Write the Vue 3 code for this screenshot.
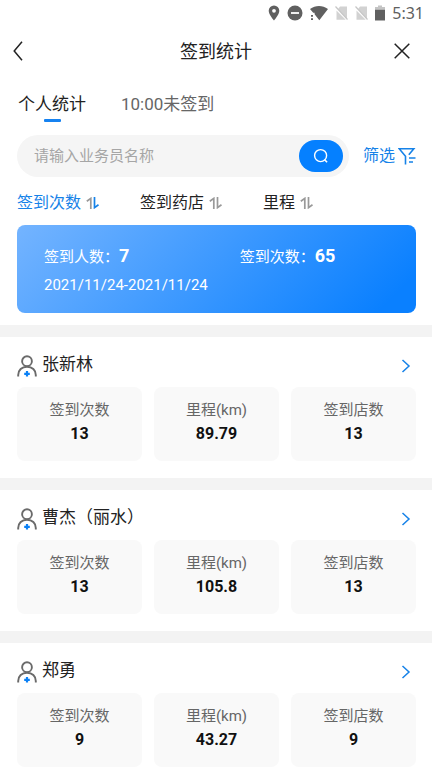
<script setup>
import { ref } from 'vue'

const keyword = ref('')
const activeTab = ref(0)
const activeSort = ref(0)
const tabs = ['个人统计', '10:00未签到']
const sorts = ['签到次数', '签到药店', '里程']
const people = [
  { name: '张新林', visits: '13', mileage: '89.79', stores: '13' },
  { name: '曹杰（丽水）', visits: '13', mileage: '105.8', stores: '13' },
  { name: '郑勇', visits: '9', mileage: '43.27', stores: '9' },
]
</script>

<template>
  <div class="page">
    <div class="status">
      <svg width="12" height="16" viewBox="0 0 12 16" aria-hidden="true">
        <path fill="#606060" fill-rule="evenodd" d="M6 0.5A5.3 5.3 0 0 0 .7 5.8C.7 9.8 6 15.5 6 15.5s5.300-5.700 5.300-9.700A5.300 5.300 0 0 0 6 .5zM6 3.900a1.900 1.900 0 1 1 0 3.800 1.900 1.900 0 0 1 0-3.800z" />
      </svg>
      <svg width="16" height="16" viewBox="0 0 16 16" aria-hidden="true">
        <circle cx="8" cy="8" r="7.500" fill="#606060" />
        <path d="M4 8h8" stroke="#fff" stroke-width="1.800" />
      </svg>
      <svg width="18" height="16" viewBox="0 0 18 16" aria-hidden="true">
        <path fill="#606060" d="M0 4.100C5.500-.1 12.500-.1 18 4.100L9.300 15.200 4.600 9.200V7.700H3.200z" />
        <path fill="#606060" d="M1 10h2v1.800H1zM1 13.200h2V15H1z" />
      </svg>
      <svg v-for="n in 2" :key="n" width="13" height="16" viewBox="0 0 13 16" aria-hidden="true">
        <path fill="#d2d2d2" d="M5 1.500h7v12.300L3 4.100zM1.500 5.500l9.200 9.200H1.500z" />
        <path d="M.5 1.500l12 13" stroke="#c6c6c6" stroke-width="1.200" />
      </svg>
      <svg width="10" height="16" viewBox="0 0 10 16" aria-hidden="true">
        <path fill="#c4c4c4" d="M3 .5h4V2h3v3H0V2h3z" />
        <path fill="#606060" d="M0 4.800h10v10.700H0z" />
      </svg>
      <span class="clock">5:31</span>
    </div>

    <header class="nav">
      <button class="nav-btn" type="button" aria-label="返回">
        <svg width="10" height="20" viewBox="0 0 10 20"><path d="M9 .8L1.200 10 9 19.200" fill="none" stroke="#222" stroke-width="1.500" /></svg>
      </button>
      <h1>签到统计</h1>
      <button class="nav-btn close" type="button" aria-label="关闭">
        <svg width="16" height="16" viewBox="0 0 16 16"><path d="M.7.7l14.600 14.600M15.300.7L.7 15.300" fill="none" stroke="#222" stroke-width="1.500" /></svg>
      </button>
    </header>

    <nav class="tabs">
      <button v-for="(tab, i) in tabs" :key="tab" type="button" class="tab" :class="{ active: activeTab === i }" @click="activeTab = i">{{ tab }}</button>
    </nav>

    <div class="search-row">
      <form class="search" @submit.prevent>
        <input v-model="keyword" type="text" placeholder="请输入业务员名称" aria-label="请输入业务员名称" />
        <button class="search-btn" type="submit" aria-label="搜索">
          <svg width="16" height="16" viewBox="0 0 16 16"><circle cx="7.600" cy="7.600" r="6" fill="none" stroke="#fff" stroke-width="1.400" /><path d="M11.500 11.600l2.600 2.600" stroke="#fff" stroke-width="1.500" /></svg>
        </button>
      </form>
      <button class="filter" type="button">
        <span>筛选</span>
        <svg width="18" height="18" viewBox="0 0 18 18" fill="none" stroke="#1682e8" stroke-width="1.600" aria-hidden="true"><path d="M7.500 17.500V9.200L1.200 1.700h14.600l-5 6M11 11h6.500M11 15h4" /></svg>
      </button>
    </div>

    <div class="sorts">
      <button v-for="(sort, i) in sorts" :key="sort" type="button" class="sort" :class="{ active: activeSort === i }" @click="activeSort = i">
        <span>{{ sort }}</span>
        <svg width="14" height="12" viewBox="0 0 14 12" fill="none" stroke-width="1.700" aria-hidden="true">
          <path class="up" d="M.8 4.300l4-2.900V12" />
          <path class="down" d="M8.500 0v10.600l4-2.900" />
        </svg>
      </button>
    </div>

    <section class="summary">
      <p>签到人数：<strong>7</strong></p>
      <p>签到次数：<strong>65</strong></p>
      <p class="dates">2021/11/24-2021/11/24</p>
    </section>

    <main>
      <section v-for="person in people" :key="person.name" class="person">
        <a class="person-head" href="#">
          <svg width="20" height="22" viewBox="0 0 20 22" fill="none" aria-hidden="true">
            <circle cx="10" cy="6.200" r="4.900" stroke="#6a6a6a" stroke-width="1.900" />
            <path d="M1.200 21.500v-1.500c0-5 3.600-8.300 8.800-8.300s8.800 3.300 8.800 8.300v1.500" stroke="#6a6a6a" stroke-width="1.900" />
            <path d="M10 16v5.600M7.200 18.800h5.600" stroke="#0b80f5" stroke-width="2.200" />
          </svg>
          <h2>{{ person.name }}</h2>
          <svg width="10" height="14" viewBox="0 0 10 14" fill="none" aria-hidden="true"><path d="M1.500 1l6.500 6-6.500 6" stroke="#1682e8" stroke-width="1.500" /></svg>
        </a>
        <dl class="stats">
          <div class="stat"><dt>签到次数</dt><dd>{{ person.visits }}</dd></div>
          <div class="stat"><dt>里程(km)</dt><dd>{{ person.mileage }}</dd></div>
          <div class="stat"><dt>签到店数</dt><dd>{{ person.stores }}</dd></div>
        </dl>
      </section>
    </main>
  </div>
</template>

<style>
html {
  scrollbar-width: none;
}
body {
  margin: 0;
  background: #fff;
}
</style>

<style scoped>
.page {
  font-family: Roboto, "Noto Sans CJK SC", sans-serif;
  font-size: 16px;
  color: #222;
  background: #fff;
}
button,
input {
  font: inherit;
  color: inherit;
  border: 0;
  padding: 0;
  margin: 0;
  background: none;
}
button {
  cursor: pointer;
}
svg {
  display: block;
  flex: none;
}
h1,
h2,
p,
dl,
dd {
  margin: 0;
}
.status {
  display: flex;
  align-items: center;
  justify-content: flex-end;
  gap: 7px;
  height: 26px;
  padding-right: 8px;
}
.clock {
  font-family: "Noto Sans", sans-serif;
  font-size: 16px;
  line-height: 26px;
  color: #606060;
}
.nav {
  display: grid;
  grid-template-columns: 48px 1fr 48px;
  align-items: center;
  height: 50px;
}
.nav h1 {
  padding-top: 2px;
  font-size: 18px;
  font-weight: 400;
  line-height: 26px;
  text-align: center;
}
.nav-btn {
  display: flex;
  align-items: center;
  height: 50px;
  padding-left: 13px;
}
.nav-btn.close {
  justify-content: flex-end;
  padding: 0 22px 0 0;
}
.tabs {
  display: flex;
  gap: 35px;
  padding: 13px 18px 0;
}
.tab {
  display: flex;
  flex-direction: column;
  align-items: center;
  height: 46px;
  font-size: 17px;
  line-height: 30px;
  color: #666;
}
.tab.active {
  color: #222;
}
.tab.active::after {
  content: "";
  width: 17px;
  height: 3px;
  border-radius: 1px;
  background: #1682f0;
}
.search-row {
  display: flex;
  align-items: center;
  gap: 14px;
  padding: 0 16px 0 17px;
}
.search {
  display: flex;
  align-items: center;
  flex: 1;
  min-width: 0;
  height: 42px;
  padding: 0 6px 0 17px;
  box-sizing: border-box;
  border-radius: 21px;
  background: #f5f5f5;
}
.search input {
  flex: 1;
  min-width: 0;
  height: 40px;
  outline: 0;
  font-size: 15px;
}
.search input::placeholder {
  color: #a6a6a6;
  opacity: 1;
}
.search-btn {
  display: flex;
  align-items: center;
  justify-content: center;
  width: 44px;
  height: 32px;
  border-radius: 16px;
  background: #0580ff;
}
.filter {
  display: flex;
  align-items: center;
  gap: 3px;
  color: #1682e8;
  line-height: 24px;
}
.sorts {
  display: flex;
  gap: 40px;
  height: 48px;
  padding: 0 17px;
}
.sort {
  display: flex;
  align-items: center;
  gap: 5px;
  padding-top: 4px;
  line-height: 24px;
}
.sort.active {
  color: #1682e8;
}
.up,
.down {
  stroke: #999;
}
.sort.active .down {
  stroke: #1682e8;
}
.summary {
  display: grid;
  grid-template-columns: 10fr 9fr;
  align-content: center;
  row-gap: 2px;
  height: 88px;
  margin: 0 16px 12px 17px;
  padding: 2px 0 0 27px;
  box-sizing: border-box;
  border-radius: 8px;
  background: linear-gradient(135deg, #74b4ff, #0a80ff 92%);
  color: #fff;
  font-size: 15px;
  line-height: 26px;
}
.summary strong {
  font-size: 18px;
  font-weight: 700;
}
.dates {
  grid-column: 1 / -1;
}
.person {
  padding: 0 16px 17px 17px;
  border-top: 12px solid #f3f3f3;
}
.person-head {
  display: flex;
  align-items: center;
  gap: 5px;
  height: 50px;
  padding: 7px 5px 0 0;
  box-sizing: border-box;
  color: inherit;
  text-decoration: none;
}
.person-head h2 {
  flex: 1;
  padding-bottom: 3px;
  font-size: 17px;
  font-weight: 400;
  line-height: 26px;
}
.stats {
  display: grid;
  grid-template-columns: repeat(3, 1fr);
  gap: 12px;
}
.stat {
  height: 74px;
  padding-top: 11px;
  box-sizing: border-box;
  border-radius: 8px;
  background: #f9f9f9;
  text-align: center;
}
.stat dt {
  font-size: 15px;
  line-height: 24px;
  color: #666;
}
.stat dd {
  font-weight: 700;
  line-height: 24px;
  color: #111;
}
</style>
